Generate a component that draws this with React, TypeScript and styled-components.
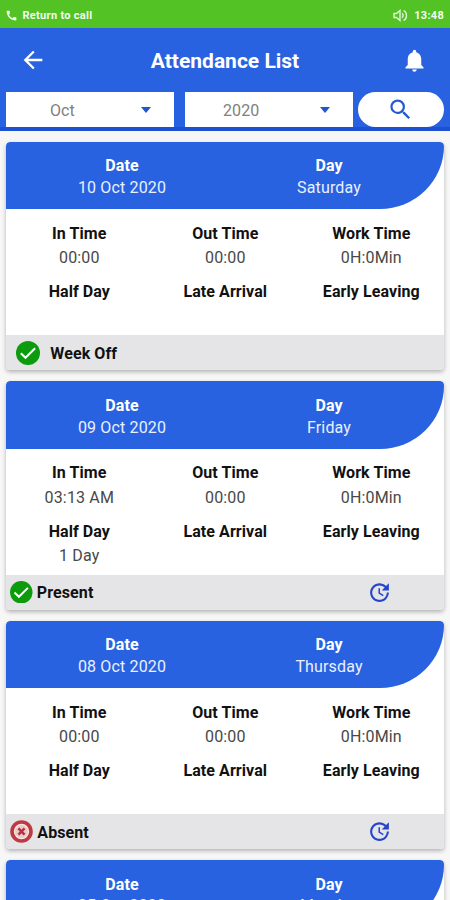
import React from "react";
import styled, { createGlobalStyle } from "styled-components";
import { MdArrowBack, MdNotifications, MdSearch, MdUpdate, MdCall } from "react-icons/md";

const GlobalStyle = createGlobalStyle`
  * { box-sizing: border-box; }
  body {
    margin: 0;
    font-family: Roboto, "Liberation Sans", sans-serif;
    background: #f7f7f8;
  }
`;

const Screen = styled.div`
  width: 450px;
  height: 900px;
  overflow: hidden;
  display: flex;
  flex-direction: column;
  background: #f7f7f8;
`;

const StatusBar = styled.div`
  height: 28px;
  flex: none;
  display: flex;
  align-items: center;
  justify-content: space-between;
  padding: 2px 6px 0 5px;
  background: #53c225;
  color: #f4fbef;
  font-size: 11px;
  font-weight: 700;
`;

const StatusGroup = styled.div<{ $gap: number }>`
  display: flex;
  align-items: center;
  gap: ${(p) => p.$gap}px;
`;

const CallText = styled.span`
  letter-spacing: 0.3px;
`;

const ClockText = styled.span`
  letter-spacing: 0.3px;
`;

const Header = styled.header`
  flex: none;
  height: 103px;
  background: #2962e0;
  border-bottom: 4px solid #1c52d2;
`;

const TitleRow = styled.div`
  height: 64px;
  display: grid;
  grid-template-columns: 70px 1fr 70px;
  align-items: center;
  color: #fff;
  svg { display: block; margin: 0 auto; }
`;

const BackSlot = styled.div`
  padding-right: 5px;
`;

const BellSlot = styled.div`
  padding-right: 2px;
`;

const Title = styled.h1`
  margin: 0;
  padding-top: 2px;
  text-align: center;
  font-size: 21px;
  line-height: 28px;
  font-weight: 700;
`;

const Filters = styled.div`
  display: flex;
  height: 35px;
  padding: 0 6px;
`;

const Select = styled.div<{ $left: number; $gap: number }>`
  width: 168px;
  height: 35px;
  margin-right: ${(p) => p.$gap}px;
  padding: 1px 23px 0 ${(p) => p.$left}px;
  display: flex;
  align-items: center;
  justify-content: space-between;
  background: #fff;
  color: #808080;
  font-size: 16px;
  letter-spacing: 0.1px;
`;

const Caret = styled.i`
  border: 5px solid transparent;
  border-top: 6px solid #1f55ce;
  border-bottom: 0;
`;

const SearchButton = styled.button`
  width: 86px;
  height: 35px;
  border: 0;
  padding: 0 2px 0 0;
  border-radius: 18px;
  background: #fff;
  color: #2459cf;
  display: flex;
  align-items: center;
  justify-content: center;
`;

const List = styled.main`
  flex: none;
  padding: 10.7px 5.7px 0 6.3px;
  display: flex;
  flex-direction: column;
  gap: 11px;
`;

const Card = styled.article`
  height: 228.6px;
  border-radius: 4px;
  overflow: hidden;
  background: #fff;
  box-shadow: 0 2px 4px rgba(0, 0, 0, 0.28);
`;

const CardHead = styled.div`
  height: 67.3px;
  padding: 13.4px 11.8px 0 12.2px;
  display: grid;
  grid-template-columns: 1fr 1fr;
  border-radius: 4px 4px 64px 0 / 4px 4px 63px 0;
  background: #2962e0;
  color: #fff;
  text-align: center;
`;

const CardBody = styled.div`
  height: 126px;
  padding-top: 12.8px;
  display: grid;
  grid-template-columns: repeat(3, 1fr);
  grid-auto-rows: 58.5px;
  text-align: center;
`;

const Label = styled.div<{ $line: number }>`
  font-size: 16px;
  line-height: ${(p) => p.$line}px;
  letter-spacing: 0.08px;
  font-weight: 700;
`;

const Value = styled.div<{ $line: number; $muted?: boolean }>`
  font-size: 16px;
  line-height: ${(p) => p.$line}px;
  letter-spacing: 0.15px;
  color: ${(p) => (p.$muted ? "#484848" : "#eaf0ff")};
`;

const BodyLabel = styled(Label)`
  color: #111;
`;

const CardFoot = styled.div<{ $inset: number; $gap: number }>`
  height: 35.3px;
  padding: 0 52.5px 0 ${(p) => p.$inset}px;
  display: flex;
  align-items: center;
  gap: ${(p) => p.$gap}px;
  background: #e5e5e7;
  color: #111;
  svg { flex: none; }
`;

const StatusText = styled.span`
  flex: 1;
  padding-top: 2px;
  font-size: 16px;
  line-height: 20px;
  letter-spacing: 0.1px;
  font-weight: 700;
`;

const SpeakerIcon = () => (
  <svg width="15" height="13" viewBox="0 0 15 13" fill="none" stroke="#eaf8e2" strokeWidth="1.3">
    <path d="M1 4.5h2.4L7 1.5v10L3.4 8.5H1z" />
    <path d="M9 4.2c1.5 1.1 1.5 3.5 0 4.6M10.6 1.5c3.9 1.8 3.9 8.2 0 10" />
  </svg>
);

const CheckIcon = ({ size }: { size: number }) => (
  <svg width={size} height={size} viewBox="0 0 24 24">
    <circle cx="12" cy="12" r="12" fill="#0c9b0c" />
    <path d="M4.8 12.2l4.7 4.6 9.6-9.5" fill="none" stroke="#fff" strokeWidth="2.1" />
  </svg>
);

const AbsentIcon = () => (
  <svg width="23" height="23" viewBox="0 0 24 24">
    <circle cx="12" cy="12" r="11.8" fill="#bf3a40" />
    <circle cx="12" cy="12" r="7.4" fill="#ecc9ca" stroke="#f8e9e9" strokeWidth="1.2" />
    <path d="M8.8 8.8l6.4 6.4M15.2 8.8l-6.4 6.4" stroke="#b5343b" strokeWidth="2.6" />
  </svg>
);

type Status = "Week Off" | "Present" | "Absent";

interface Entry {
  date: string;
  day: string;
  inTime: string;
  halfDay?: string;
  status: Status;
}

const entries: Entry[] = [
  { date: "10 Oct 2020", day: "Saturday", inTime: "00:00", status: "Week Off" },
  { date: "09 Oct 2020", day: "Friday", inTime: "03:13 AM", halfDay: "1 Day", status: "Present" },
  { date: "08 Oct 2020", day: "Thursday", inTime: "00:00", status: "Absent" },
];

const HeadFields = ({ date, day, line = 22 }: { date: string; day: string; line?: number }) => (
  <CardHead>
    <div>
      <Label $line={22}>Date</Label>
      <Value $line={line}>{date}</Value>
    </div>
    <div>
      <Label $line={22}>Day</Label>
      <Value $line={line}>{day}</Value>
    </div>
  </CardHead>
);

const AttendanceCard = ({ entry }: { entry: Entry }) => {
  const weekOff = entry.status === "Week Off";
  const fields: [string, string][] = [
    ["In Time", entry.inTime],
    ["Out Time", "00:00"],
    ["Work Time", "0H:0Min"],
    ["Half Day", entry.halfDay ?? ""],
    ["Late Arrival", ""],
    ["Early Leaving", ""],
  ];
  return (
    <Card>
      <HeadFields date={entry.date} day={entry.day} />
      <CardBody>
        {fields.map(([label, value]) => (
          <div key={label}>
            <BodyLabel $line={24.4}>{label}</BodyLabel>
            <Value $line={24.4} $muted>{value}</Value>
          </div>
        ))}
      </CardBody>
      <CardFoot $inset={weekOff ? 10 : 4} $gap={weekOff ? 10 : 4}>
        {entry.status === "Absent" ? <AbsentIcon /> : <CheckIcon size={weekOff ? 24 : 22.5} />}
        <StatusText>{entry.status}</StatusText>
        {!weekOff && <MdUpdate size={25} color="#2445cc" />}
      </CardFoot>
    </Card>
  );
};

export default function App() {
  return (
    <>
      <GlobalStyle />
      <Screen>
        <StatusBar>
          <StatusGroup $gap={4.5}>
            <MdCall size={13} />
            <CallText>Return to call</CallText>
          </StatusGroup>
          <StatusGroup $gap={6}>
            <SpeakerIcon />
            <ClockText>13:48</ClockText>
          </StatusGroup>
        </StatusBar>
        <Header>
          <TitleRow>
            <BackSlot><MdArrowBack size={28} /></BackSlot>
            <Title>Attendance List</Title>
            <BellSlot><MdNotifications size={27} /></BellSlot>
          </TitleRow>
          <Filters>
            <Select $left={44} $gap={11}>Oct<Caret /></Select>
            <Select $left={38} $gap={5}>2020<Caret /></Select>
            <SearchButton aria-label="Search"><MdSearch size={27} /></SearchButton>
          </Filters>
        </Header>
        <List>
          {entries.map((entry) => <AttendanceCard key={entry.date} entry={entry} />)}
          <Card>
            <HeadFields date="05 Oct 2020" day="Monday" line={20} />
          </Card>
        </List>
      </Screen>
    </>
  );
}
